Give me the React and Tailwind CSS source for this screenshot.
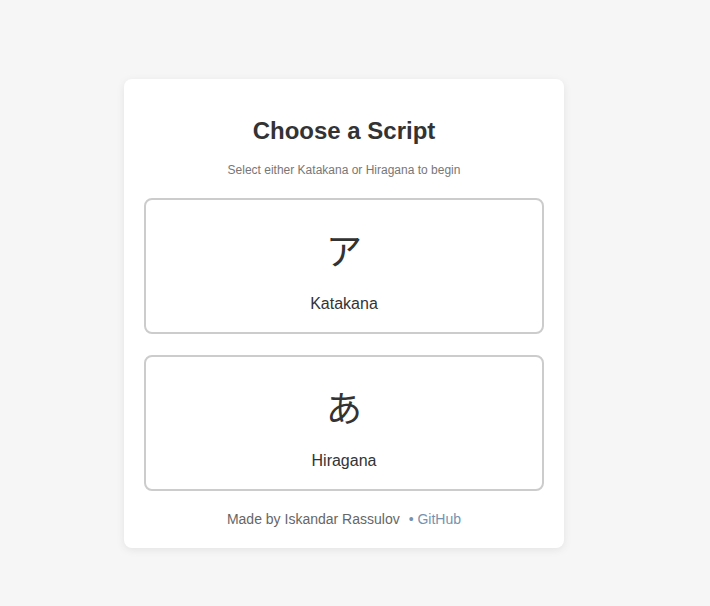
import React from 'react';

const ScriptButton = ({ glyph, label }) => (
    <button className="flex h-[136px] w-full flex-col items-center rounded-lg border-2 border-[#cccccc] bg-white pt-[22px] text-[#333333]">
        <span className="text-[36px] leading-[54px]" style={{ fontFamily: '"Noto Sans CJK JP", sans-serif' }}>
            {glyph}
        </span>
        <span className="mt-[18px] text-[16px] leading-[19px]">{label}</span>
    </button>
);

export default function App() {
    return (
        <div className="min-h-[606px] bg-[#f6f6f6] pt-[79px] pl-[124px]" style={{ fontFamily: '"Liberation Sans", Arial, sans-serif' }}>
            <div className="w-[440px] rounded-lg bg-white p-5 shadow-[0_2px_8px_rgba(0,0,0,0.08)]">
                {/* Header */}
                <h1 className="mt-[17px] text-center text-[24px] font-bold leading-[29px] text-[#333333]">
                    Choose a Script
                </h1>
                <p className="mt-[18px] text-center text-[12px] leading-[15px] text-[#777777]">
                    Select either Katakana or Hiragana to begin
                </p>

                {/* Script options */}
                <div className="mt-[20px] flex flex-col gap-[21px]">
                    <ScriptButton glyph="ア" label="Katakana" />
                    <ScriptButton glyph="あ" label="Hiragana" />
                </div>

                {/* Footer */}
                <div className="mt-[20px] text-center text-[14px] leading-[17px] text-[#666666]">
                    Made by Iskandar Rassulov
                    <span className="ml-[9px] text-[#7592b0]">• GitHub</span>
                </div>
            </div>
        </div>
    );
}
